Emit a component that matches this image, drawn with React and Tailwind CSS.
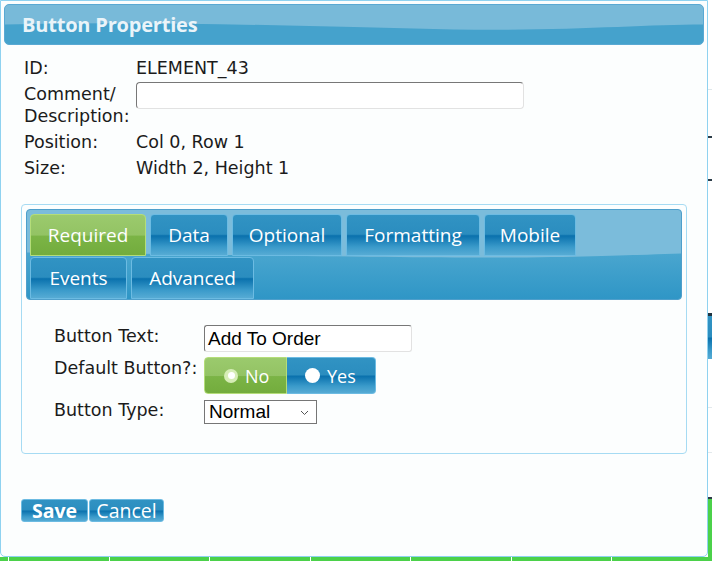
import React from "react";

const blueGloss =
  "bg-[linear-gradient(to_bottom,#3193c3_0%,#2b8dbf_48%,#0a71ad_52%,#3a9aca_80%,#56abd4_100%)]";
const greenGloss =
  "bg-[linear-gradient(to_bottom,#9bca6d_0%,#93c364_50%,#7bb446_53%,#73ac3d_100%)]";

function Tab({ label, w, active }) {
  return (
    <div
      className={`${w} h-[42px] flex items-center justify-center rounded-t-[4px] border text-[19px] text-white font-['Open_Sans',sans-serif] ${
        active ? `${greenGloss} border-[#b4dd79]` : `${blueGloss} border-[#6cbbe2]`
      }`}
    >
      {label}
    </div>
  );
}

function Chevron() {
  return (
    <svg width="9" height="6" viewBox="0 0 9 6" className="absolute right-[7px] top-[9px]">
      <polyline points="1,1 4.5,4.5 8,1" fill="none" stroke="#555" strokeWidth="1" />
    </svg>
  );
}

export default function App() {
  return (
    <div className="relative w-[712px] h-[561px] bg-white overflow-hidden flex flex-col">
      {/* background page */}
      <div className="flex-1 flex flex-row">
        <div className="flex-1" />
        <div className="w-[4px] flex flex-col">
          <div className="h-[89px]" />
          <div className="h-px bg-[#dfe7ea]" />
          <div className="h-[46px]" />
          <div className="h-[2px] bg-[#2c3c48]" />
          <div className="h-[41px]" />
          <div className="h-[2px] bg-[#2c3c48]" />
          <div className="h-[132px]" />
          <div className="h-[3px] bg-[#1f3340]" />
          <div className={`h-[43px] ${blueGloss}`} />
          <div className="h-[48px]" />
          <div className="h-px bg-[#e3e9ec]" />
          <div className="h-[44px]" />
          <div className="h-px bg-[#e3e9ec]" />
          <div className="h-[44px]" />
          <div className="h-[2px] bg-[#2c3c48]" />
          <div className="flex-1 bg-[#4bd14a]" />
        </div>
      </div>
      <div className="h-[4px] flex flex-row bg-[#4bd14a]">
        <div className="w-[8px]" />
        <div className="w-[101px] border-l border-white" />
        <div className="w-[100px] border-l border-white" />
        <div className="w-[101px] border-l border-white" />
        <div className="w-[100px] border-l border-white" />
        <div className="w-[101px] border-l border-white" />
        <div className="w-[100px] border-l border-white" />
        <div className="flex-1 border-l border-white" />
      </div>

      {/* dialog window */}
      <div className="absolute left-0 top-0 w-[708px] h-[557px] border border-[#8fd2f0] rounded-b-[5px] bg-[#fcfefe] flex flex-col font-['DejaVu_Sans',sans-serif] text-[#1b1b1b]">
        {/* header */}
        <div className="relative mx-[3px] mt-[3px] h-[41px] rounded-[5px] border border-[#5aa9d3] bg-[#78bad9] overflow-hidden flex items-center pl-[17px]">
          <svg
            className="absolute inset-0 w-full h-full"
            viewBox="0 0 700 40"
            preserveAspectRatio="none"
          >
            <path
              d="M0,20 C150,16 300,22 450,25 C560,27 640,20 700,20 L700,40 L0,40 Z"
              fill="#45a2cc"
            />
          </svg>
          <span className="relative text-[20px] font-bold text-[#eaf4f9] font-['Open_Sans',sans-serif] tracking-[-0.2px]">
            Button Properties
          </span>
        </div>

        {/* info */}
        <div className="ml-[23px] mt-[12px] grid grid-cols-[112px_1fr] gap-y-[4px] items-start text-[17.5px] leading-[22px]">
          <div>ID:</div>
          <div>ELEMENT_43</div>
          <div>
            Comment/
            <br />
            Description:
          </div>
          <div>
            <div className="-mt-px w-[388px] h-[27px] rounded-[4px] border border-[#e2e2e2] border-t-[#777] border-l-[#777] bg-white" />
          </div>
          <div>Position:</div>
          <div>Col 0, Row 1</div>
          <div>Size:</div>
          <div>Width 2, Height 1</div>
        </div>

        {/* tab box */}
        <div className="ml-[20px] mt-[25px] w-[666px] rounded-[4px] border border-[#a6dbf3] bg-[#fcfefe] p-[4px]">
          <div className="relative rounded-[4px] border border-[#4f9fcb] bg-[#7bbcdb] overflow-hidden pt-[4px] pl-[3px] flex flex-col gap-[1px]">
            <svg
              className="absolute inset-0 w-full h-full"
              viewBox="0 0 654 90"
              preserveAspectRatio="none"
            >
              <defs>
                <linearGradient id="barLow" x1="0" y1="0" x2="0" y2="1">
                  <stop offset="0" stopColor="#4aa6cf" />
                  <stop offset="1" stopColor="#2f96c6" />
                </linearGradient>
              </defs>
              <path
                d="M0,43 C200,45 400,49 500,48 C580,47 620,45 654,44 L654,90 L0,90 Z"
                fill="url(#barLow)"
              />
            </svg>
            <div className="relative flex flex-row gap-[4px]">
              <Tab label="Required" w="w-[116px]" active />
              <Tab label="Data" w="w-[78px]" />
              <Tab label="Optional" w="w-[110px]" />
              <Tab label="Formatting" w="w-[134px]" />
              <Tab label="Mobile" w="w-[92px]" />
            </div>
            <div className="relative flex flex-row gap-[4px]">
              <Tab label="Events" w="w-[97px]" />
              <Tab label="Advanced" w="w-[123px]" />
            </div>
          </div>

          {/* form */}
          <div className="pl-[28px] pt-[25px] pb-[25px] grid grid-cols-[150px_1fr] gap-y-[5px] items-start text-[17.5px] leading-[22px]">
            <div>Button Text:</div>
            <div className="w-[208px] h-[27px] rounded-[3px] border border-[#e2e2e2] border-t-[#777] border-l-[#777] bg-white flex items-center pl-[3px] font-['Liberation_Sans',sans-serif] text-[19px] text-black">
              Add To Order
            </div>
            <div>Default Button?:</div>
            <div className="flex flex-row h-[37px] w-[172px] font-['Open_Sans',sans-serif] text-[18px] text-white">
              <div className={`w-[83px] flex items-center pl-[19px] gap-[7px] rounded-l-[4px] border border-[#b4dd79] ${greenGloss}`}>
                <span className="w-[14px] h-[14px] rounded-full bg-[#d6edb6] flex items-center justify-center">
                  <span className="w-[7px] h-[7px] rounded-full bg-white" />
                </span>
                <span>No</span>
              </div>
              <div className={`flex-1 flex items-center pl-[18px] gap-[7px] rounded-r-[4px] border border-l-0 border-[#6cbbe2] ${blueGloss}`}>
                <span className="w-[15px] h-[15px] rounded-full bg-white" />
                <span>Yes</span>
              </div>
            </div>
            <div>Button Type:</div>
            <div className="relative mt-[1px] w-[113px] h-[24px] border border-[#767676] bg-white flex items-center pl-[4px] font-['Liberation_Sans',sans-serif] text-[19px] text-black">
              Normal
              <Chevron />
            </div>
          </div>
        </div>

        {/* buttons */}
        <div className="ml-[20px] mt-[45px] flex flex-row gap-[1px] font-['Open_Sans',sans-serif] text-[19.5px] text-white">
          <div className={`w-[67px] h-[23px] flex items-center justify-center rounded-[3px] border border-[#6cbbe2] font-bold ${blueGloss}`}>
            Save
          </div>
          <div className={`w-[75px] h-[23px] flex items-center justify-center rounded-[3px] border border-[#6cbbe2] ${blueGloss}`}>
            Cancel
          </div>
        </div>
      </div>
    </div>
  );
}
